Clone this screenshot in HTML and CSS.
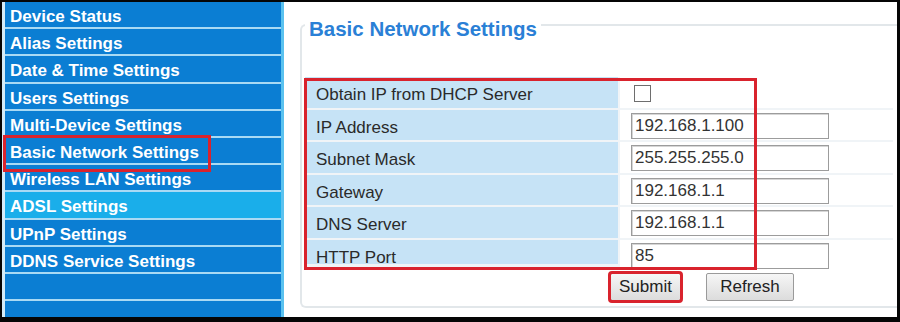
FILE: index.html
```html
<!DOCTYPE html>
<html lang="en">
<head>
<meta charset="utf-8">
<title>Basic Network Settings</title>
<link rel="stylesheet" href="styles.css">
</head>
<body>
<div class="frame">
  <div class="screen">
    <nav class="sidebar">
      <div class="nav-item">Device Status</div>
      <div class="nav-item">Alias Settings</div>
      <div class="nav-item">Date &amp; Time Settings</div>
      <div class="nav-item">Users Settings</div>
      <div class="nav-item">Multi-Device Settings</div>
      <div class="nav-item marked">Basic Network Settings</div>
      <div class="nav-item">Wireless LAN Settings</div>
      <div class="nav-item active">ADSL Settings</div>
      <div class="nav-item">UPnP Settings</div>
      <div class="nav-item">DDNS Service Settings</div>
      <div class="nav-item"></div>
      <div class="nav-item last"></div>
    </nav>
    <main class="main">
      <fieldset class="panel">
        <legend class="panel-title">Basic Network Settings</legend>
        <div class="form-wrap">
          <div class="form">
            <div class="label">Obtain IP from DHCP Server</div>
            <div class="value"><input type="checkbox" class="check"></div>
            <div class="label">IP Address</div>
            <div class="value"><input type="text" class="field" value="192.168.1.100"></div>
            <div class="label">Subnet Mask</div>
            <div class="value"><input type="text" class="field" value="255.255.255.0"></div>
            <div class="label">Gateway</div>
            <div class="value"><input type="text" class="field" value="192.168.1.1"></div>
            <div class="label">DNS Server</div>
            <div class="value"><input type="text" class="field" value="192.168.1.1"></div>
            <div class="label short">HTTP Port</div>
            <div class="value"><input type="text" class="field" value="85"></div>
          </div>
        </div>
        <div class="actions">
          <button class="btn marked-btn">Submit</button>
          <button class="btn">Refresh</button>
        </div>
      </fieldset>
    </main>
  </div>
</div>
</body>
</html>
```

FILE: styles.css
```css
* { box-sizing: border-box; }

html, body {
  margin: 0;
  padding: 0;
  width: 900px;
  height: 322px;
  overflow: hidden;
  background: #000;
  font-family: "Liberation Sans", Arial, sans-serif;
}

.frame {
  width: 900px;
  height: 322px;
  padding: 2px 3px 5px 2px;
  background: #050505;
}

.screen {
  display: flex;
  height: 315px;
  background: #fff;
  overflow: hidden;
}

.sidebar {
  width: 282px;
  flex: none;
  border-left: 3px solid #d3ebf8;
  border-right: 3px solid #5bc2ef;
  background: #0b7ed3;
  display: flex;
  flex-direction: column;
}

.nav-item {
  position: relative;
  height: 27.2px;
  padding: 4px 0 0 5px;
  line-height: 21px;
  border-bottom: 2px solid #a9daf4;
  background: #0b7ed3;
  color: #fff;
  font-weight: bold;
  font-size: 17px;
  white-space: nowrap;
  flex: none;
}

.nav-item.last { border-bottom: none; flex: 1; }

.nav-item.active { background: #1aaeea; }

.nav-item.marked::after {
  content: "";
  position: absolute;
  z-index: 2;
  left: -2px;
  top: -3px;
  width: 202px;
  height: 31px;
  border: 3px solid #d9232d;
}

.main {
  flex: 1;
  min-width: 0;
  background: #fff;
  padding-top: 6px;
}

.panel {
  margin: 0 0 0 16px;
  padding: 0 0 5px 3px;
  border: 2px solid #e2e7ea;
  border-right: none;
  border-radius: 6px 0 0 6px;
  min-width: 0;
}

.panel-title {
  padding: 9px 4px 0;
  line-height: 24px;
  font-size: 20.5px;
  font-weight: bold;
  color: #2a80d6;
}

.form-wrap {
  position: relative;
  margin-top: 36px;
  width: 588px;
}

.form-wrap::after {
  content: "";
  position: absolute;
  left: -1px;
  top: 1px;
  width: 447px;
  height: 186px;
  border: 3px solid #d9232d;
  pointer-events: none;
}

.form {
  display: grid;
  grid-template-columns: 313px 273px;
  grid-auto-rows: 30.5px;
  gap: 2px;
  background: #f0f4f7;
}

.label {
  background: #c6e3f6;
  color: #2a2a2a;
  font-size: 17px;
  padding: 5px 0 0 11px;
  line-height: 25.5px;
  white-space: nowrap;
}

.label.short {
  align-self: start;
  height: 24px;
}

.value {
  background: #fff;
  display: flex;
  align-items: center;
  padding-left: 11px;
}

.check {
  appearance: none;
  -webkit-appearance: none;
  width: 17px;
  height: 17px;
  margin: 2px 0 0 3px;
  border: 1px solid #6e6e6e;
  background: #fff;
}

.field {
  width: 198px;
  height: 26px;
  margin: 2px 0 0;
  padding: 0 3px;
  border: 1px solid #9c9c9c;
  box-shadow: inset 1px 1px 0 #d6d6d6;
  font-family: "Liberation Sans", Arial, sans-serif;
  font-size: 17px;
  color: #333;
  background: #fff;
}

.actions {
  display: flex;
  gap: 25px;
  padding-left: 305px;
  margin-top: 3px;
}

.btn {
  height: 28px;
  padding: 0;
  border: 1px solid #9a9a9a;
  border-radius: 2px;
  background: linear-gradient(#f6f6f6, #dcdcdc);
  font-family: "Liberation Sans", Arial, sans-serif;
  font-size: 17px;
  color: #222;
  width: 88px;
}

.marked-btn {
  width: 71px;
  outline: 3px solid #d9232d;
  outline-offset: -1px;
}
```
